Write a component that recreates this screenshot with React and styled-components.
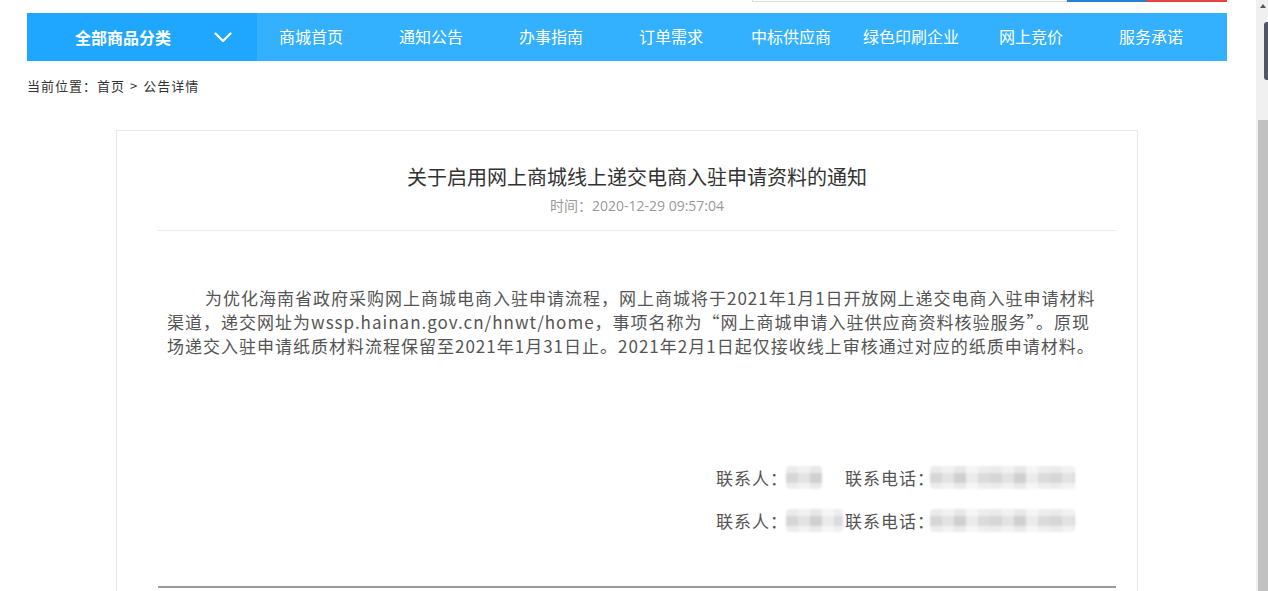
import React from "react";
import styled, { createGlobalStyle } from "styled-components";

const GlobalStyle = createGlobalStyle`
  html, body {
    margin: 0;
    padding: 0;
    height: 100%;
    overflow: hidden;
    background: #fff;
  }
  body {
    font-family: "Noto Sans CJK SC", "Open Sans", sans-serif;
    color: #333;
  }
  * {
    box-sizing: border-box;
  }
`;

const Page = styled.div`
  display: flex;
  width: 1268px;
  height: 591px;
  overflow: hidden;
  position: relative;
`;

const Main = styled.div`
  flex: 1;
  min-width: 0;
`;

const Container = styled.div`
  width: 1200px;
  margin: 0 0 0 27px;
`;

/* cut off header: only the bottom edge of the search box is left */
const TopStrip = styled.div`
  height: 13px;
  display: flex;
  justify-content: flex-end;
  align-items: flex-start;
`;

const SearchEdge = styled.div`
  width: 315px;
  height: 2px;
  border: 1px solid #dcdcdc;
  border-top: none;
`;

const SearchBtn = styled.div`
  width: 80px;
  height: 2px;
  background: ${(p) => p.$color};
`;

const NavBar = styled.nav`
  display: flex;
  height: 48px;
  background: #33b1fe;
`;

const Category = styled.div`
  width: 230px;
  background: #1fa6fe;
  display: flex;
  align-items: center;
  justify-content: space-between;
  padding: 0 25px 0 48px;
  color: #fff;
  font-size: 16px;
  font-weight: 700;
`;

const NavList = styled.ul`
  display: flex;
  margin: 0;
  padding: 0;
  list-style: none;
`;

const NavItem = styled.li`
  width: 120px;
  padding: 0 12px 2px 0;
  display: flex;
  align-items: center;
  justify-content: center;
  color: #fff;
  font-size: 16px;
  white-space: nowrap;
`;

const Breadcrumb = styled.div`
  height: 69px;
  padding-top: 16px;
  font-size: 13px;
  line-height: 18px;
  color: #333;
  letter-spacing: 1px;
  span {
    margin: 0 5px;
  }
`;

const Card = styled.div`
  width: 1022px;
  margin: 0 auto;
  border: 1px solid #e8e8e8;
  padding: 0 21px 40px 41px;
`;

const Header = styled.div`
  padding: 31px 0 14px;
  border-bottom: 1px solid #ececec;
  text-align: center;
`;

const Title = styled.h1`
  margin: 0;
  font-size: 20px;
  font-weight: 400;
  line-height: 30px;
  color: #333;
`;

const Time = styled.div`
  margin-top: 4px;
  font-family: "Open Sans", "Noto Sans CJK SC", sans-serif;
  font-size: 14px;
  line-height: 20px;
  color: #999;
`;

const Body = styled.p`
  margin: 55px 0 0;
  padding: 0 9px;
  font-size: 17px;
  letter-spacing: 1px;
  line-height: 24px;
  color: #555;
  white-space: nowrap;
`;

const Indent = styled.span`
  display: inline-block;
  width: 38px;
`;

const Contacts = styled.div`
  margin-top: 98px;
  padding-left: 558px;
`;

const ContactRow = styled.div`
  display: flex;
  align-items: center;
  height: 43px;
  font-size: 17px;
  letter-spacing: 1px;
  color: #555;
  white-space: nowrap;
`;

const NameSlot = styled.div`
  width: 57px;
  margin-left: -2px;
  margin-right: 2px;
  display: flex;
  align-items: center;
`;

const PhoneSlot = styled.div`
  margin-left: -5px;
  display: flex;
  align-items: center;
`;

const Blur = styled.div`
  width: ${(p) => p.$w}px;
  height: 23px;
  border-radius: 4px;
  background:
    linear-gradient(180deg, rgba(255, 255, 255, 0.5) 0 30%, rgba(255, 255, 255, 0) 30% 72%, rgba(255, 255, 255, 0.55) 72%),
    repeating-linear-gradient(
      90deg,
      #d6d6d6 0 12px,
      #e3e3e3 12px 24px,
      #d0d0d0 24px 36px,
      #ebebeb 36px 48px,
      #dbdbdb 48px 60px
    );
  filter: blur(0.8px);
`;

const BottomLine = styled.div`
  margin-top: 44px;
  height: 2px;
  background: #9a9a9a;
`;

const Scrollbar = styled.div`
  width: 12px;
  background: #f0f0f0;
  display: flex;
  flex-direction: column;
  align-items: flex-end;
`;

const ArrowUp = styled.div`
  width: 100%;
  height: 12px;
  display: flex;
  justify-content: center;
  align-items: center;
  padding-left: 2px;
  &::before {
    content: "";
    border-left: 3px solid transparent;
    border-right: 3px solid transparent;
    border-bottom: 4px solid #555;
  }
`;

const Thumb = styled.div`
  margin-top: 108px;
  width: 10px;
  flex: 1;
  background: #c1c1c1;
`;

/* floating side tab that peeks in from the right edge */
const SideTab = styled.div`
  position: absolute;
  top: 22px;
  right: 0;
  width: 4px;
  height: 58px;
  background: #525662;
  border-radius: 3px 0 0 3px;
`;

const Chevron = () => (
  <svg width="18" height="11" viewBox="0 0 18 11" fill="none">
    <polyline points="1.5,1.5 9,9 16.5,1.5" stroke="#fff" strokeWidth="2.2" strokeLinecap="round" strokeLinejoin="round" />
  </svg>
);

const navItems = ["商城首页", "通知公告", "办事指南", "订单需求", "中标供应商", "绿色印刷企业", "网上竞价", "服务承诺"];

const contacts = [
  { name: 36, phone: 145 },
  { name: 60, phone: 145 },
];

export default function App() {
  return (
    <>
      <GlobalStyle />
      <Page>
        <Main>
          <Container>
            <TopStrip>
              <SearchEdge />
              <SearchBtn $color="#2a7fd4" />
              <SearchBtn $color="#ea4040" />
            </TopStrip>
            <NavBar>
              <Category>
                全部商品分类
                <Chevron />
              </Category>
              <NavList>
                {navItems.map((item) => (
                  <NavItem key={item}>{item}</NavItem>
                ))}
              </NavList>
            </NavBar>
            <Breadcrumb>
              当前位置：首页<span>&gt;</span>公告详情
            </Breadcrumb>
            <Card>
              <Header>
                <Title>关于启用网上商城线上递交电商入驻申请资料的通知</Title>
                <Time>时间：2020-12-29 09:57:04</Time>
              </Header>
              <Body>
                <Indent />
                为优化海南省政府采购网上商城电商入驻申请流程，网上商城将于2021年1月1日开放网上递交电商入驻申请材料
                <br />
                渠道，递交网址为wssp.hainan.gov.cn/hnwt/home，事项名称为“网上商城申请入驻供应商资料核验服务”。原现
                <br />
                场递交入驻申请纸质材料流程保留至2021年1月31日止。2021年2月1日起仅接收线上审核通过对应的纸质申请材料。
              </Body>
              <Contacts>
                {contacts.map((c, i) => (
                  <ContactRow key={i}>
                    联系人：
                    <NameSlot>
                      <Blur $w={c.name} />
                    </NameSlot>
                    联系电话：
                    <PhoneSlot>
                      <Blur $w={c.phone} />
                    </PhoneSlot>
                  </ContactRow>
                ))}
              </Contacts>
              <BottomLine />
            </Card>
          </Container>
        </Main>
        <Scrollbar>
          <ArrowUp />
          <Thumb />
        </Scrollbar>
        <SideTab />
      </Page>
    </>
  );
}
